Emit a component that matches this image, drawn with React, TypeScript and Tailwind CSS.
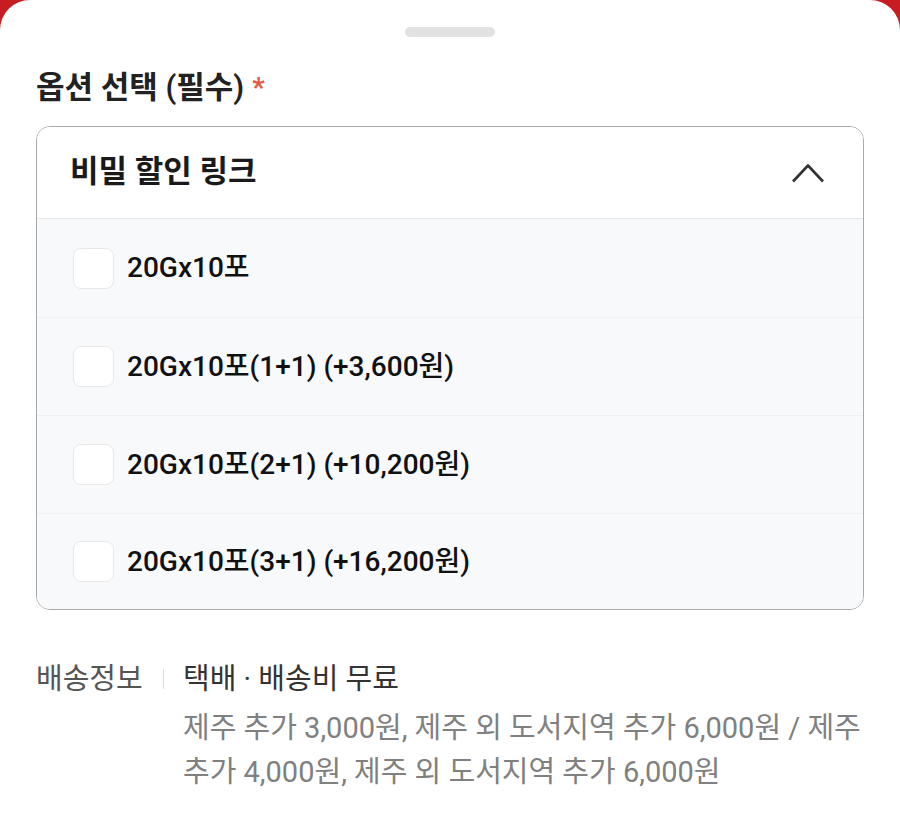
const options = [
  "20Gx10포",
  "20Gx10포(1+1) (+3,600원)",
  "20Gx10포(2+1) (+10,200원)",
  "20Gx10포(3+1) (+16,200원)",
];

const font = { fontFamily: 'Roboto, "Noto Sans CJK KR", sans-serif' };

export default function App() {
  return (
    <div className="min-h-[816px] bg-[#c71d22]" style={font}>
      <div className="min-h-[816px] rounded-t-[30px] bg-white px-9 pt-[27px]">
        <div className="mx-auto h-[10px] w-[90px] rounded-full bg-[#e2e2e2]" />

        <h2 className="mt-[31px] flex items-center text-[31px] font-semibold leading-[40px] text-[#222]">
          옵션 선택 (필수)
          <span className="ml-[8px] text-[28px] text-[#e25a44]">*</span>
        </h2>

        <div className="mt-[18px] overflow-hidden rounded-[14px] border-[1.5px] border-[#a9a9a9]">
          <div className="flex h-[92px] items-center justify-between border-b border-[#e6e8eb] bg-white pl-[33px] pr-[38px]">
            <span className="text-[31px] font-bold text-[#1a1a1a]">비밀 할인 링크</span>
            <svg width="34" height="22" viewBox="0 0 34 22" fill="none" stroke="#333" strokeWidth="2.6" strokeLinejoin="round">
              <polyline points="2,19.5 17,3.5 32,19.5" />
            </svg>
          </div>
          <ul className="bg-[#f8f9fb]">
            {options.map((o, i) => (
              <li
                key={o}
                className={`flex items-center gap-[13px] pl-[36px] ${i > 0 ? "border-t border-[#eef0f3]" : ""} ${i === 3 ? "h-[96px]" : "h-[98px]"}`}
              >
                <span className="h-[41px] w-[41px] shrink-0 rounded-[8px] border border-[#e8e8e8] bg-white" />
                <span className="text-[28px] font-medium text-[#111]">{o}</span>
              </li>
            ))}
          </ul>
        </div>

        <div className="mt-[47px] flex text-[29px] leading-[44px]">
          <span className="w-[127px] shrink-0 text-[#555]">배송정보</span>
          <span className="mt-[12px] h-[20px] w-px shrink-0 bg-[#dddddd]" />
          <div className="flex-1 pl-[19px]">
            <div className="text-[#333]">택배 · 배송비 무료</div>
            <p className="mt-[5px] text-[#808080]">
              제주 추가 3,000원, 제주 외 도서지역 추가 6,000원 / 제주 추가 4,000원, 제주 외 도서지역 추가 6,000원
            </p>
          </div>
        </div>
      </div>
    </div>
  );
}
